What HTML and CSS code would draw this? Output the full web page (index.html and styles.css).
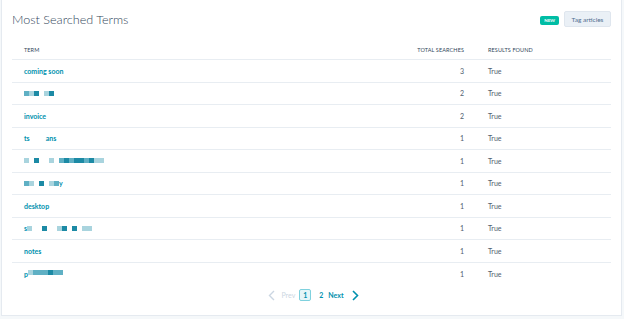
FILE: index.html
```html
<!DOCTYPE html>
<html lang="en">
<head>
    <meta charset="UTF-8">
    <meta name="viewport" content="width=device-width, initial-scale=1.0">
    <title>Most Searched Terms</title>
    <link rel="stylesheet" href="styles.css">
</head>
<body>
    <div class="card">
        <div class="card-header">
            <h1>Most Searched Terms</h1>
            <div class="actions">
                <span class="badge">NEW</span>
                <button type="button" class="btn">Tag articles</button>
            </div>
        </div>

        <div class="table">
            <div class="row head">
                <div class="cell">Term</div>
                <div class="cell num">Total searches</div>
                <div class="cell">Results found</div>
            </div>
            <div class="row">
                <div class="cell term">coming soon</div>
                <div class="cell num">3</div>
                <div class="cell">True</div>
            </div>
            <div class="row">
                <div class="cell term"><span class="blur"><i class="b2"></i><i class="b1"></i><i class="b3"></i><i class="gap"></i><i class="b1"></i><i class="b3"></i></span></div>
                <div class="cell num">2</div>
                <div class="cell">True</div>
            </div>
            <div class="row">
                <div class="cell term">invoice</div>
                <div class="cell num">2</div>
                <div class="cell">True</div>
            </div>
            <div class="row">
                <div class="cell term">ts<span class="space"></span>ans</div>
                <div class="cell num">1</div>
                <div class="cell">True</div>
            </div>
            <div class="row">
                <div class="cell term"><span class="blur"><i class="b1"></i><i class="gap"></i><i class="b3"></i><i class="gap"></i><i class="gap"></i><i class="b1"></i><i class="gap"></i><i class="b2"></i><i class="b3"></i><i class="b2"></i><i class="b3"></i><i class="b3"></i><i class="b2"></i><i class="b3"></i><i class="b1"></i><i class="b1"></i></span></div>
                <div class="cell num">1</div>
                <div class="cell">True</div>
            </div>
            <div class="row">
                <div class="cell term"><span class="blur"><i class="b2"></i><i class="b1"></i><i class="gap"></i><i class="b3"></i><i class="gap"></i><i class="b1"></i><i class="b2"></i></span>y</div>
                <div class="cell num">1</div>
                <div class="cell">True</div>
            </div>
            <div class="row">
                <div class="cell term">desktop</div>
                <div class="cell num">1</div>
                <div class="cell">True</div>
            </div>
            <div class="row">
                <div class="cell term">s<span class="blur"><i class="b1"></i><i class="gap"></i><i class="gap"></i><i class="b3"></i><i class="gap"></i><i class="gap"></i><i class="b1"></i><i class="b3"></i><i class="gap"></i><i class="b3"></i><i class="gap"></i><i class="b1"></i><i class="b1"></i></span></div>
                <div class="cell num">1</div>
                <div class="cell">True</div>
            </div>
            <div class="row">
                <div class="cell term">notes</div>
                <div class="cell num">1</div>
                <div class="cell">True</div>
            </div>
            <div class="row last">
                <div class="cell term">p<span class="blur up"><i class="b1"></i><i class="b2"></i><i class="b2"></i><i class="b2"></i><i class="b3"></i><i class="b2"></i><i class="b2"></i></span></div>
                <div class="cell num">1</div>
                <div class="cell">True</div>
            </div>
        </div>

        <div class="pager">
            <svg class="chev" width="7" height="11" viewBox="0 0 7 11"><path d="M6 1 L1.5 5.5 L6 10" fill="none" stroke="#cbd6e2" stroke-width="1.4"/></svg>
            <span class="prev-label">Prev</span>
            <span class="page current">1</span>
            <span class="page">2</span>
            <span class="next-label">Next</span>
            <svg class="chev" width="7" height="11" viewBox="0 0 7 11"><path d="M1 1 L5.5 5.5 L1 10" fill="none" stroke="#0091ae" stroke-width="1.6"/></svg>
        </div>
    </div>
</body>
</html>
```

FILE: styles.css
```css
body {
    font-family: 'Lato', 'Open Sans', sans-serif;
    background-color: #f5f8fa;
    margin: 0;
    padding: 0;
    color: #4f5e6e;
}
.card {
    background: white;
    border: 1px solid #e5eaf0;
    border-top: none;
    margin: 0 2px 0 1px;
    padding: 0 10px 0 10px;
    height: 316px;
    box-sizing: border-box;
}
.card-header {
    display: flex;
    justify-content: space-between;
    align-items: center;
    height: 40px;
}
h1 {
    font-size: 12.6px;
    font-weight: 300;
    color: #33475b;
    margin: 0;
    padding-top: 0;
    margin-top: -2px;
}
.actions {
    display: flex;
    align-items: center;
    gap: 5px;
}
.badge {
    background-color: #00bda5;
    color: white;
    font-size: 4.5px;
    font-weight: bold;
    padding: 2px 4px;
    border-radius: 2px;
    line-height: 5px;
}
.btn {
    font-family: inherit;
    font-size: 6.5px;
    color: #516f90;
    background-color: #eaf0f6;
    border: 1px solid #dfe6ee;
    border-radius: 2px;
    height: 16px;
    width: 47px;
    padding: 0;
    margin-top: -2px;
}
.table {
    display: flex;
    flex-direction: column;
}
.row {
    display: grid;
    grid-template-columns: 1fr 100px 135px;
    height: 22.5px;
    box-sizing: border-box;
    border-bottom: 1px solid #e8edf2;
    align-items: center;
    font-size: 7px;
}
.row.head {
    height: 20px;
    font-size: 5.5px;
    text-transform: uppercase;
    color: #33475b;
    letter-spacing: 0.1px;
}
.row.last {
    border-bottom: none;
}
.cell {
    padding: 0 12px;
    white-space: nowrap;
}
.cell.num {
    text-align: right;
}
.term {
    color: #0091ae;
    font-weight: bold;
    font-size: 7px;
    display: flex;
    align-items: center;
}
.space {
    display: inline-block;
    width: 16px;
}
.blur {
    display: inline-flex;
    align-items: center;
}
.blur.up {
    margin-top: -3px;
}
.blur i {
    display: inline-block;
    width: 5px;
    height: 5px;
}
.blur .b1 { background-color: #a9d4de; }
.blur .b2 { background-color: #5fb0c4; }
.blur .b3 { background-color: #1c8aa5; }
.blur .gap { background: transparent; }
.pager {
    display: flex;
    justify-content: center;
    align-items: center;
    gap: 4px;
    margin-top: 4px;
    font-size: 7px;
    font-weight: bold;
    color: #0091ae;
    padding-left: 4px;
}
.prev-label {
    color: #cbd6e2;
    font-weight: normal;
    margin-left: 2px;
}
.page {
    display: inline-block;
    min-width: 6px;
    text-align: center;
}
.page.current {
    border: 1px solid #7fd1de;
    background-color: #e5f5f8;
    padding: 1px 2px;
    border-radius: 2px;
    margin-right: 3px;
}
.next-label {
    margin-right: 4px;
}
```
